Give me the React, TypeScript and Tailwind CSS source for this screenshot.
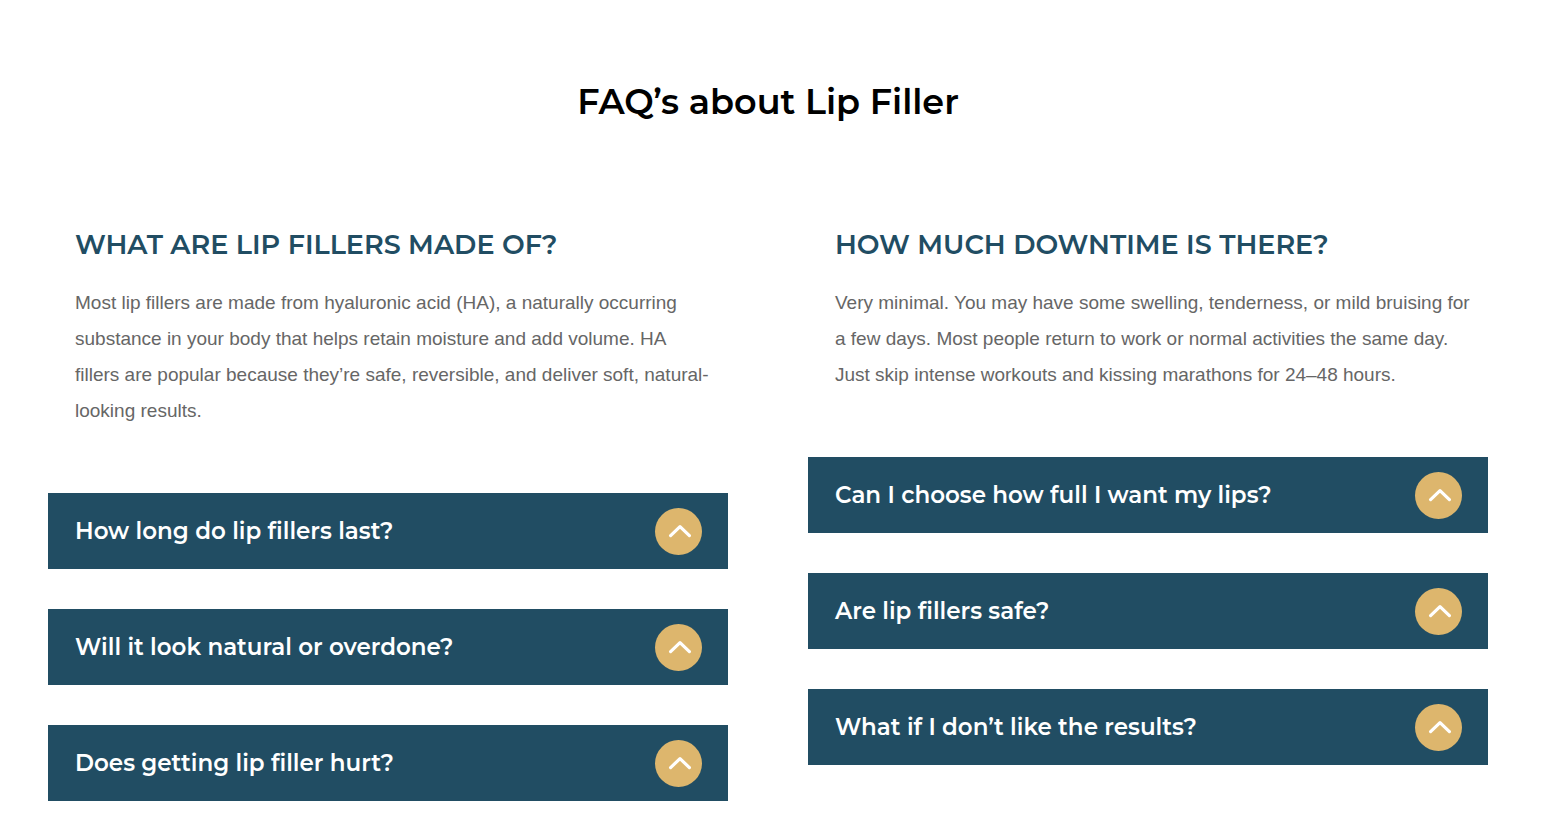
import { useState } from "react";

interface Faq {
  question: string;
  answer: string;
}

const leftFaqs: Faq[] = [
  {
    question: "What are lip fillers made of?",
    answer:
      "Most lip fillers are made from hyaluronic acid (HA), a naturally occurring substance in your body that helps retain moisture and add volume. HA fillers are popular because they’re safe, reversible, and deliver soft, natural-looking results.",
  },
  { question: "How long do lip fillers last?", answer: "" },
  { question: "Will it look natural or overdone?", answer: "" },
  { question: "Does getting lip filler hurt?", answer: "" },
];

const rightFaqs: Faq[] = [
  {
    question: "How much downtime is there?",
    answer:
      "Very minimal. You may have some swelling, tenderness, or mild bruising for a few days. Most people return to work or normal activities the same day. Just skip intense workouts and kissing marathons for 24–48 hours.",
  },
  { question: "Can I choose how full I want my lips?", answer: "" },
  { question: "Are lip fillers safe?", answer: "" },
  { question: "What if I don’t like the results?", answer: "" },
];

const FaqColumn = ({ faqs }: { faqs: Faq[] }) => {
  const [open, setOpen] = useState(0);

  return (
    <div className="flex min-w-0 flex-1 flex-col gap-10">
      {faqs.map(({ question, answer }, index) =>
        index === open ? (
          <section key={question} className="pr-4 pb-6 pl-[27px]">
            <h2>
              <button
                type="button"
                aria-expanded="true"
                className="block text-left font-['Montserrat',Inter,sans-serif] text-[27px] leading-8 font-semibold text-[#214d63] uppercase"
              >
                {question}
              </button>
            </h2>
            <p className="mt-6 font-['Liberation_Sans',sans-serif] text-[19px] leading-9 text-[#666666]">
              {answer}
            </p>
          </section>
        ) : (
          <h2 key={question}>
            <button
              type="button"
              aria-expanded="false"
              onClick={() => setOpen(index)}
              className="flex min-h-19 w-full cursor-pointer items-center justify-between bg-[#214d63] pr-[26px] pl-[27px] text-left font-['Montserrat',Inter,sans-serif] text-[23px] font-semibold text-white"
            >
              {question}
              <span className="flex size-[47px] shrink-0 items-center justify-center rounded-full bg-[#ddb66d]">
                <svg viewBox="0 0 24 14" className="w-6" fill="none" aria-hidden="true">
                  <path
                    d="M3.6 11.6 13 2.6 22.4 11.6"
                    stroke="currentColor"
                    strokeWidth="3.2"
                    strokeLinecap="round"
                    strokeLinejoin="round"
                  />
                </svg>
              </span>
            </button>
          </h2>
        )
      )}
    </div>
  );
};

const App = () => {
  return (
    <main className="bg-white pt-20 pr-[58px] pb-6 pl-12">
      <h1 className="text-center font-['Montserrat',Inter,sans-serif] text-[35px] leading-[44px] font-semibold text-black">
        FAQ’s about Lip Filler
      </h1>
      <div className="mt-[105px] flex gap-20">
        <FaqColumn faqs={leftFaqs} />
        <FaqColumn faqs={rightFaqs} />
      </div>
    </main>
  );
};

export default App;
